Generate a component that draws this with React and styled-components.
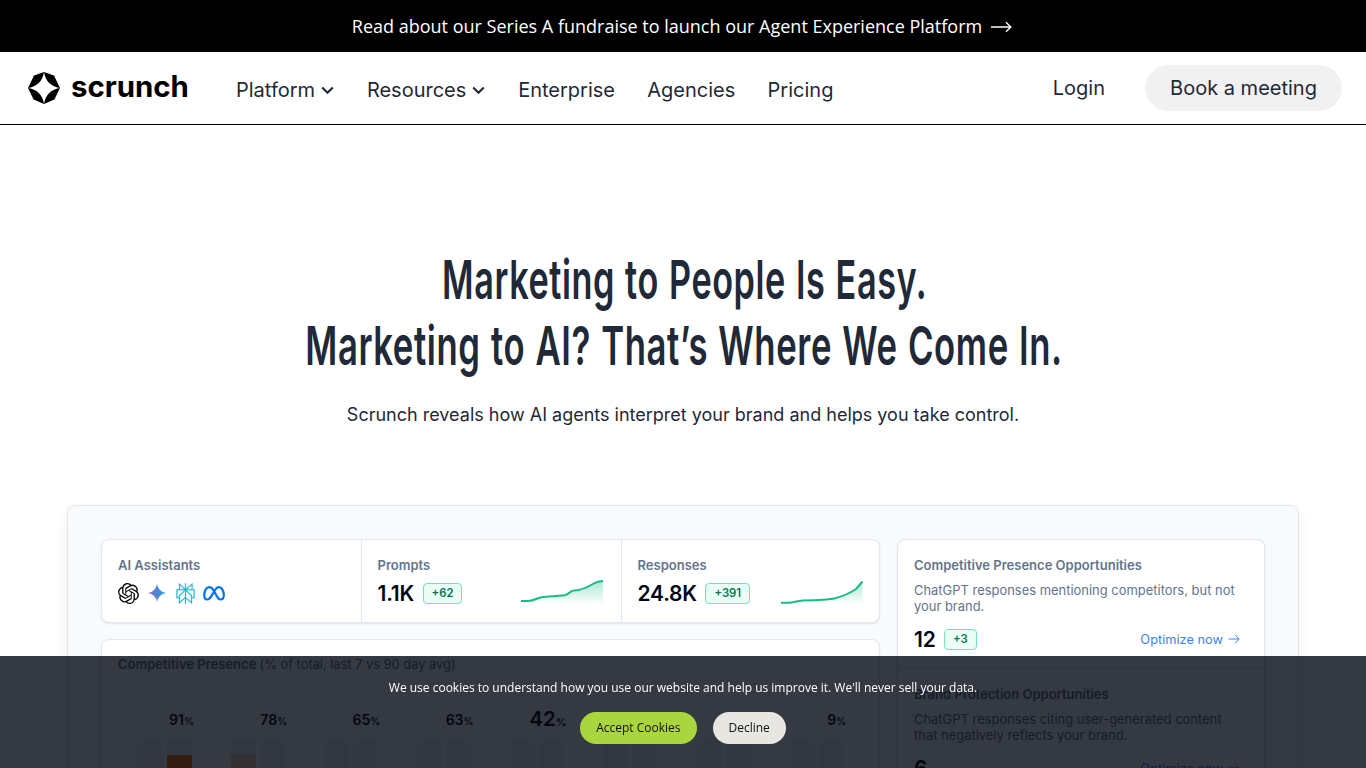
// Libraries
import React from 'react';
import styled, { createGlobalStyle } from 'styled-components';
import { SiOpenai, SiPerplexity } from 'react-icons/si';

const navItems = [
    { label: 'Platform', menu: true },
    { label: 'Resources', menu: true },
    { label: 'Enterprise' },
    { label: 'Agencies' },
    { label: 'Pricing' },
];

const presence = [
    { value: 91, before: 0, now: 16 },
    { value: 78, before: 16, now: 0, faded: true },
    { value: 65 },
    { value: 63 },
    { value: 42, own: true },
    { value: null },
    { value: null },
    { value: 9 },
];

const opportunities = [
    {
        title: 'Competitive Presence Opportunities',
        text: ['ChatGPT responses mentioning competitors, but not', 'your brand.'],
        count: '12',
        change: '+3',
    },
    {
        title: 'Brand Protection Opportunities',
        text: ['ChatGPT responses citing user-generated content', 'that negatively reflects your brand.'],
        count: '6',
    },
];

const Chevron = () => (
    <svg width="13" height="9" viewBox="0 0 13 9" fill="none">
        <path d="M1.2 1.4L6.5 6.8L11.8 1.4" stroke="#1f2937" strokeWidth="2.1" />
    </svg>
);

const LogoMark = () => (
    <svg width="32" height="34" viewBox="0 0 32 34">
        <path
            fill="#000"
            d="M16 1L26 4.6L32 17L26.4 28.4L16 33L5.6 28.4L0 17L6 4.6Z"
        />
        <path
            fill="#fff"
            d="M16 1Q18.2 14.6 31.6 17Q18.2 19.4 16 33Q13.8 19.4 .4 17Q13.8 14.6 16 1Z"
        />
    </svg>
);

const Gemini = () => (
    <svg width="18" height="18" viewBox="0 0 18 18">
        <defs>
            <linearGradient id="gemini" x1="0" y1="0" x2="1" y2="0">
                <stop offset="0" stopColor="#9168c0" />
                <stop offset=".45" stopColor="#5684d1" />
                <stop offset="1" stopColor="#1ba1e3" />
            </linearGradient>
        </defs>
        <path
            fill="url(#gemini)"
            d="M9 0Q10.4 7.6 18 9Q10.4 10.4 9 18Q7.6 10.4 0 9Q7.6 7.6 9 0Z"
        />
    </svg>
);

const Meta = () => (
    <svg width="22" height="15" viewBox="0 0 22 15" fill="none">
        <path
            d="M11 5C9.4 2.4 8 1.2 6.2 1.2C3.3 1.2 1.2 5 1.2 9C1.2 11.8 2.4 13.5 4.4 13.5C6.6 13.5 7.8 11.4 11 5.8C12.6 2.9 14 1.2 16 1.2C18.8 1.2 20.8 5 20.8 9C20.8 11.8 19.8 13.5 17.7 13.5C15.4 13.5 14.2 11 11 5Z"
            stroke="#0573ee"
            strokeWidth="2.2"
        />
    </svg>
);

const Trend = ({ id, line }) => (
    <svg width="82" height="26" viewBox="0 0 82 26" fill="none">
        <defs>
            <linearGradient id={id} x1="0" y1="0" x2="0" y2="1">
                <stop offset="0" stopColor="#10b981" stopOpacity=".35" />
                <stop offset="1" stopColor="#10b981" stopOpacity="0" />
            </linearGradient>
        </defs>
        <path d={`${line}V24H0Z`} fill={`url(#${id})`} />
        <path d={line} stroke="#19bb86" strokeWidth="2" />
    </svg>
);

const App = () => {
    return (
        <Page>
            <GlobalStyle />
            <Banner>
                Read about our Series A fundraise to launch our Agent Experience Platform
                <svg width="21" height="12" viewBox="0 0 21 12" fill="none">
                    <path
                        d="M0 6H19.5M15 1.3L19.8 6L15 10.7"
                        stroke="#fff"
                        strokeWidth="1.4"
                    />
                </svg>
            </Banner>
            <Header>
                <Logo>
                    <LogoMark />
                    <LogoText>scrunch</LogoText>
                </Logo>
                <Nav>
                    {navItems.map((item) => (
                        <NavLink key={item.label}>
                            {item.label}
                            {item.menu && <Chevron />}
                        </NavLink>
                    ))}
                </Nav>
                <Actions>
                    <span>Login</span>
                    <MeetingButton>Book a meeting</MeetingButton>
                </Actions>
            </Header>
            <Hero>
                <Title>
                    <TitleLine $scale={0.634}>Marketing to People Is Easy.</TitleLine>
                    <TitleLine $scale={0.643}>
                        Marketing to AI? That’s Where We Come In.
                    </TitleLine>
                </Title>
                <Subtitle>
                    Scrunch reveals how AI agents interpret your brand and helps you take
                    control.
                </Subtitle>
            </Hero>
            <Dashboard>
                <MainColumn>
                    <Stats>
                        <Stat>
                            <Label>AI Assistants</Label>
                            <Assistants>
                                <SiOpenai size={21} color="#0b0b0b" />
                                <Gemini />
                                <SiPerplexity
                                    size={21}
                                    color="#22b8cd"
                                    stroke="#22b8cd"
                                    strokeWidth=".2"
                                />
                                <Meta />
                            </Assistants>
                        </Stat>
                        <Stat>
                            <Label>Prompts</Label>
                            <StatRow>
                                <Value>1.1K</Value>
                                <Badge>+62</Badge>
                                <Trend
                                    id="prompts"
                                    line="M0 21H7C14 21 17 17 22 17L44 15.2C48 14 49 11 53 10.6C63 10 69 5.5 74 2.8Q78 1 82 1"
                                />
                            </StatRow>
                        </Stat>
                        <Stat>
                            <Label>Responses</Label>
                            <StatRow>
                                <Value>24.8K</Value>
                                <Badge>+391</Badge>
                                <Trend
                                    id="responses"
                                    line="M0 22.8H8C14 22 16 20.8 22 20.5C36 20.3 50 19.2 54 18.3C63 16 70 12.5 75 9L81.5 1.5"
                                />
                            </StatRow>
                        </Stat>
                    </Stats>
                    <Chart>
                        <Label>
                            Competitive Presence <em>(% of total, last 7 vs 90 day avg)</em>
                        </Label>
                        <Bars>
                            {presence.map((item, i) => (
                                <BarGroup key={i}>
                                    <BarLabel $own={item.own}>
                                        {item.value !== null && (
                                            <>
                                                {item.value}
                                                <small>%</small>
                                            </>
                                        )}
                                    </BarLabel>
                                    <Bar>{item.before > 0 && <Fill $faded={item.faded} />}</Bar>
                                    <Bar>{item.now > 0 && <Fill />}</Bar>
                                </BarGroup>
                            ))}
                        </Bars>
                    </Chart>
                </MainColumn>
                <SideCard>
                    {opportunities.map((item) => (
                        <Opportunity key={item.title}>
                            <Label>{item.title}</Label>
                            <Description>
                                {item.text[0]}
                                <br />
                                {item.text[1]}
                            </Description>
                            <StatRow>
                                <Value>{item.count}</Value>
                                {item.change && <Badge>{item.change}</Badge>}
                                <OptimizeLink>
                                    Optimize now
                                    <svg width="12" height="10" viewBox="0 0 12 10" fill="none">
                                        <path
                                            d="M.5 5H11M7 .8L11.2 5L7 9.2"
                                            stroke="#3b82f6"
                                            strokeWidth="1"
                                        />
                                    </svg>
                                </OptimizeLink>
                            </StatRow>
                        </Opportunity>
                    ))}
                </SideCard>
            </Dashboard>
            <CookieBar>
                <p>
                    We use cookies to understand how you use our website and help us improve
                    it. We'll never sell your data.
                </p>
                <CookieButtons>
                    <CookieButton $primary>Accept Cookies</CookieButton>
                    <CookieButton>Decline</CookieButton>
                </CookieButtons>
            </CookieBar>
        </Page>
    );
};

const GlobalStyle = createGlobalStyle`
    * {
        box-sizing: border-box;
    }

    body {
        margin: 0;
        background: #fff;
        overflow: hidden;
    }

    p, h1 {
        margin: 0;
    }

    svg {
        flex: none;
        display: block;
    }
`;

const Page = styled.div`
    height: 768px;
    overflow: hidden;
    font-family: Inter, sans-serif;
    color: #1f2937;
`;

const Banner = styled.div`
    display: flex;
    align-items: center;
    justify-content: center;
    gap: 9px;
    height: 52px;
    padding: 0 2px 1px 0;
    background: #000;
    color: #fff;
    font-family: 'Open Sans', sans-serif;
    font-size: 18px;

    svg {
        margin-top: 2px;
    }
`;

const Header = styled.header`
    display: flex;
    align-items: center;
    height: 73px;
    padding: 0 24px 0 28px;
    border-bottom: 1px solid #000;
    font-size: 20px;
`;

const Logo = styled.div`
    display: flex;
    align-items: center;
    gap: 11px;
    width: 208px;
`;

const LogoText = styled.div`
    color: #000;
    font-size: 29.4px;
    font-weight: 700;
    line-height: 32px;
    padding-bottom: 2px;
`;

const Nav = styled.nav`
    display: flex;
    gap: 32.3px;
    padding-top: 4px;
`;

const NavLink = styled.div`
    display: flex;
    align-items: center;
    gap: 6px;

    svg {
        margin-right: 0.5px;
    }
`;

const Actions = styled.div`
    display: flex;
    align-items: center;
    gap: 40px;
    margin-left: auto;
`;

const MeetingButton = styled.button`
    height: 46px;
    width: 197px;
    padding: 0;
    border: 0;
    border-radius: 23px;
    background: #f1f1f1;
    color: #1f2937;
    font: 400 20px Inter, sans-serif;
`;

const Hero = styled.section`
    display: flex;
    flex-direction: column;
    align-items: center;
    height: 380px;
    padding-top: 122px;
`;

const Title = styled.h1`
    display: flex;
    flex-direction: column;
    align-items: center;
    padding-left: 3px;
    font-size: 54px;
    font-weight: 600;
    letter-spacing: 0.9px;
    word-spacing: 1.5px;
    line-height: 66px;
`;

const TitleLine = styled.span`
    white-space: nowrap;
    transform: scaleX(${(p) => p.$scale});
`;

const Subtitle = styled.p`
    margin-top: 22px;
    font-size: 18px;
    line-height: 28px;
`;

const Dashboard = styled.section`
    display: flex;
    gap: 17px;
    width: 1232px;
    height: 700px;
    margin: 0 auto;
    padding: 33px;
    border: 1px solid #e2e5ea;
    border-radius: 8px;
    background: #f9fafc;
    box-shadow: 0 8px 16px rgba(0, 0, 0, 0.06);
`;

const MainColumn = styled.div`
    display: flex;
    flex-direction: column;
    gap: 16px;
    width: 779px;
`;

const Card = styled.div`
    border: 1px solid #e2e8f0;
    border-radius: 8px;
    background: #fff;
    box-shadow: 0 1px 2px rgba(15, 23, 42, 0.1);
`;

const Stats = styled(Card)`
    display: grid;
    grid-template-columns: 259px 260px 1fr;
    height: 84px;
`;

const Stat = styled.div`
    padding: 16px 16px 0;
    min-height: 0;

    & + & {
        padding-left: 15.5px;
        border-left: 1px solid #e2e8f0;
    }
`;

const Label = styled.div`
    color: #64748b;
    font-size: 13px;
    font-weight: 600;
    line-height: 18px;

    em {
        font-style: normal;
        font-weight: 400;
        letter-spacing: -0.07px;
    }
`;

const Assistants = styled.div`
    display: flex;
    align-items: center;
    gap: 8.8px;
    height: 38px;

    & > :last-child {
        margin-left: -1.7px;
    }
`;

const StatRow = styled.div`
    display: flex;
    align-items: center;
    height: 38px;

    & > svg {
        margin-left: auto;
        margin-right: 2px;
    }

    ${Stat}:last-child & > svg {
        margin-right: 0;
    }
`;

const Value = styled.div`
    color: #020617;
    font-size: 21px;
    font-weight: 600;
    letter-spacing: -0.2px;
`;

const Badge = styled.div`
    margin-left: 8.5px;
    padding: 0 8px;
    border: 1px solid #6ee7b7;
    border-radius: 4px;
    background: #ecfdf5;
    color: #047857;
    font-size: 11.3px;
    font-weight: 600;
    line-height: 19px;
`;

const Chart = styled(Card)`
    flex: 1;
    padding: 15px 16px;
`;

const Bars = styled.div`
    display: grid;
    grid-template-columns: repeat(8, 93.2px);
    margin: 33px 0 0 19.5px;
`;

const BarGroup = styled.div`
    display: grid;
    grid-template-columns: 25px 25px;
    column-gap: 4px;
`;

const BarLabel = styled.div`
    grid-column: 1 / 3;
    justify-self: end;
    height: 33px;
    margin-right: -2.5px;
    margin-top: ${(p) => (p.$own ? '-1px' : '0')};
    color: #020617;
    font-size: ${(p) => (p.$own ? '20.5px' : '14px')};
    font-weight: 600;
    line-height: 28px;
    white-space: nowrap;

    small {
        font-size: ${(p) => (p.$own ? '11px' : '10px')};
    }
`;

const Bar = styled.div`
    height: 150px;
    padding-top: 16px;
    background: #f1f5f9;
`;

const Fill = styled.div`
    height: 134px;
    background: ${(p) => (p.$faded ? '#fed7bb' : '#f97316')};
`;

const SideCard = styled(Card)`
    width: 368px;
`;

const Opportunity = styled.div`
    height: 128px;
    padding: 16px 24px 0 16px;

    & + & {
        border-top: 1px solid #e2e8f0;
    }
`;

const Description = styled.p`
    margin: 8px 0 5.8px;
    color: #64748b;
    font-size: 12.95px;
    line-height: 16.3px;
    white-space: nowrap;
`;

const OptimizeLink = styled.div`
    display: flex;
    align-items: center;
    gap: 5px;
    margin-left: auto;
    color: #3b82f6;
    font-size: 12.8px;
`;

const CookieBar = styled.div`
    position: fixed;
    inset: auto 0 0;
    display: flex;
    flex-direction: column;
    align-items: center;
    height: 112px;
    padding-top: 22px;
    background: rgba(3, 7, 18, 0.8);
    color: #fff;
    font-family: 'Open Sans', sans-serif;
    font-size: 12px;
    line-height: 20px;
`;

const CookieButtons = styled.div`
    display: flex;
    gap: 16px;
    margin-top: 14px;
`;

const CookieButton = styled.button`
    height: 32px;
    padding: 0 16px 1px;
    border: 0;
    border-radius: 16px;
    background: ${(p) => (p.$primary ? '#a9d53f' : '#e8e6e1')};
    color: #111;
    font: 400 12px 'Open Sans', sans-serif;
`;

export default App;
